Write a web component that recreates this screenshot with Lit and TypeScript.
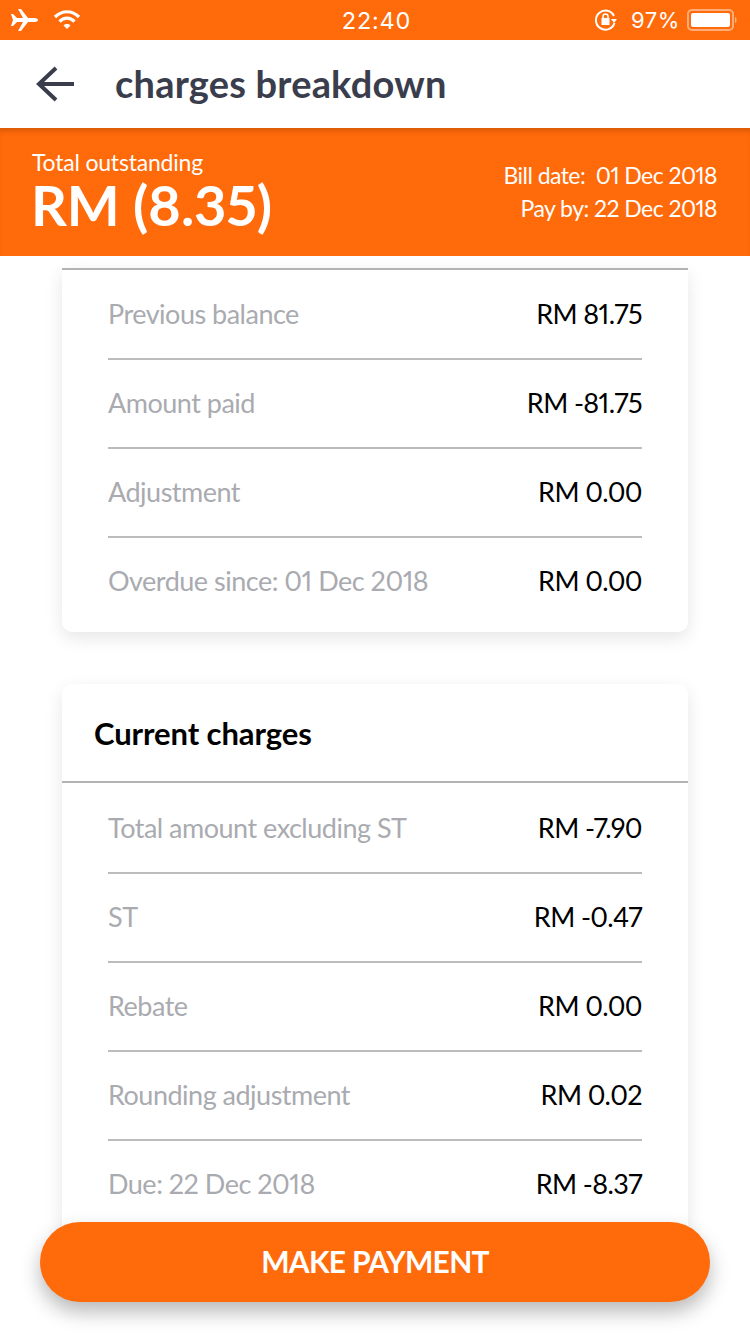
import { LitElement, html, css } from "lit";
import { customElement } from "lit/decorators.js";

const previous = [
  ["Previous balance", "RM 81.75"],
  ["Amount paid", "RM -81.75"],
  ["Adjustment", "RM 0.00"],
  ["Overdue since: 01 Dec 2018", "RM 0.00"],
];
const current = [
  ["Total amount excluding ST", "RM -7.90"],
  ["ST", "RM -0.47"],
  ["Rebate", "RM 0.00"],
  ["Rounding adjustment", "RM 0.02"],
  ["Due: 22 Dec 2018", "RM -8.37"],
];

@customElement("app-root")
export class AppRoot extends LitElement {
  static styles = css`
    :host { display: block; width: 750px; height: 1334px; position: relative; overflow: hidden; background: #fff; font-family: "Lato", "Noto Sans", sans-serif; font-variant-numeric: proportional-nums; font-feature-settings: "pnum" 1; }
    .status { height: 40px; background: #ff6a0a; color: #fff; display: grid; grid-template-columns: 1fr auto 1fr; align-items: center; padding: 0 10px; font-family: "Inter", sans-serif; position: relative; z-index: 3; }
    .status-left { display: flex; align-items: center; gap: 15px; }
    .time { font-size: 23.5px; letter-spacing: 0.8px; margin-left: 3px; }
    .status-right { display: flex; align-items: center; justify-content: flex-end; font-size: 22px; margin-right: -1px; }
    .pct { margin: 0 7px 0 13px; letter-spacing: 0.6px; }
    .nav { height: 88px; background: #fff; display: flex; align-items: center; padding-left: 36px; position: relative; z-index: 3; }
    .nav h1 { margin: 0 0 2px 41px; font-size: 38px; font-weight: 700; color: #3a3d4c; letter-spacing: 0.2px; }
    .band { height: 128px; box-sizing: border-box; background: #ff6a0a; color: #fff; display: flex; justify-content: space-between; padding: 20px 33px 0 32px; position: relative; z-index: 2; box-shadow: inset 0 6px 6px -4px rgba(120, 50, 0, 0.35); }
    .tot-label { font-size: 23px; line-height: 28px; letter-spacing: -0.2px; }
    .tot-val { font-size: 56px; line-height: 58px; font-weight: 700; margin-left: -1px; letter-spacing: -0.2px; }
    .dates { text-align: right; font-size: 23px; letter-spacing: -0.55px; line-height: 33px; padding-top: 11px; }
    .content { padding: 12px 62px 0; display: flex; flex-direction: column; gap: 52px; }
    .card { background: #fff; border-radius: 10px; box-shadow: 0 6px 18px rgba(0, 0, 0, 0.1); }
    .card.first { border-radius: 0 0 10px 10px; border-top: 2px solid #b3b3b6; }
    .card.first .rows { padding-top: 1px; padding-bottom: 5px; }
    .head { height: 99px; box-sizing: border-box; border-bottom: 2px solid #b3b3b6; display: flex; align-items: center; padding-left: 32px; font-size: 31px; font-weight: 700; color: #000; letter-spacing: -0.1px; }
    .rows { padding: 2px 46px 5px; }
    .row { height: 89px; box-sizing: border-box; padding-bottom: 2px; border-bottom: 2px solid #bcbcbe; display: flex; justify-content: space-between; align-items: center; font-size: 27px; }
    .row:last-child { border-bottom: none; padding-bottom: 4px; }
    .lab { color: #a9abb0; letter-spacing: -0.5px; }
    .val { color: #000; letter-spacing: -0.6px; }
    .pay { position: absolute; left: 40px; top: 1222px; width: 670px; height: 80px; box-sizing: border-box; padding-bottom: 2px; border-radius: 40px; background: #ff6a0a; color: #fff; display: flex; align-items: center; justify-content: center; font-size: 30px; letter-spacing: -0.7px; font-weight: 700; box-shadow: 0 10px 20px rgba(0, 0, 0, 0.28); z-index: 4; }
  `;

  rows(list: string[][]) {
    return html`<div class="rows">${list.map(
      ([l, v]) => html`<div class="row"><span class="lab">${l}</span><span class="val">${v}</span></div>`
    )}</div>`;
  }

  render() {
    return html`
      <div class="status">
        <div class="status-left">
          <svg width="28" height="24" viewBox="0 0 28 24" fill="#fff"><path d="M1 6 L3 6 L7 10 L13 10 L8 1 L11 1 L18 10 L24 10 C27 10 28 11 28 12 C28 13 27 14 24 14 L18 14 L11 23 L8 23 L13 14 L7 14 L3 18 L1 18 L3 12 Z"/></svg>
          <svg width="28" height="22" viewBox="0 0 28 22" fill="none" stroke="#fff" stroke-width="3.2"><path d="M2 8 C9 1 19 1 26 8"/><path d="M6.5 12.5 C11 8 17 8 21.5 12.5"/><path d="M14 20 L10.5 16.5 C12.5 14.6 15.5 14.6 17.5 16.5 Z" fill="#fff" stroke="none"/></svg>
        </div>
        <div class="time">22:40</div>
        <div class="status-right">
          <svg width="24" height="24" viewBox="0 0 24 24" fill="none" stroke="#fff" stroke-width="2"><path d="M20 8 A9.5 9.5 0 1 0 20.5 15"/><path d="M17 11 L23 11 L20 15 Z" fill="#fff" stroke="none"/><rect x="7.5" y="10" width="8" height="7" fill="#fff" stroke="none"/><path d="M9 10 V8.5 A2.5 2.5 0 0 1 14 8.5 V10" stroke-width="1.5"/></svg>
          <span class="pct">97%</span>
          <svg width="54" height="24" viewBox="0 0 54 24"><rect x="1" y="2" width="45" height="20" rx="4" fill="none" stroke="#fff" stroke-opacity=".45" stroke-width="2"/><rect x="4" y="5" width="39" height="14" rx="2" fill="#fff"/><path d="M48 9 C50 9.5 50 14.5 48 15 Z" fill="#fff" fill-opacity=".5"/></svg>
        </div>
      </div>
      <div class="nav">
        <svg width="38" height="36" viewBox="0 0 38 36" fill="none" stroke="#3a3d4c" stroke-width="4"><path d="M38 18 H3"/><path d="M20 2 L3 18 L20 34"/></svg>
        <h1>charges breakdown</h1>
      </div>
      <div class="band">
        <div>
          <div class="tot-label">Total outstanding</div>
          <div class="tot-val">RM (8.35)</div>
        </div>
        <div class="dates">
          <div>Bill date:&nbsp; 01 Dec 2018</div>
          <div>Pay by: 22 Dec 2018</div>
        </div>
      </div>
      <div class="content">
        <div class="card first">${this.rows(previous)}</div>
        <div class="card">
          <div class="head">Current charges</div>
          ${this.rows(current)}
        </div>
      </div>
      <div class="pay">MAKE PAYMENT</div>
    `;
  }
}
